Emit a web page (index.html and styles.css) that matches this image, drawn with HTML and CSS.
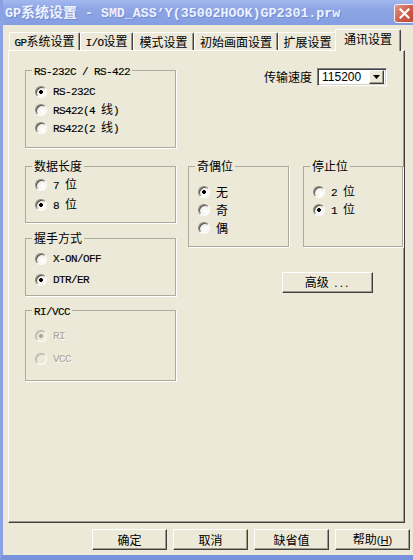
FILE: index.html
```html
<!DOCTYPE html>
<html lang="zh">
<head>
<meta charset="utf-8">
<title>GP系统设置</title>
<link rel="stylesheet" href="styles.css">
</head>
<body>
<div class="window">
  <div class="titlebar">
    <span class="title"><span class="tm">GP</span><span class="tc">系统设置</span><span class="tm"> - SMD_ASS’Y(35002HOOK)GP2301.prw</span></span>
    <span class="close"><svg width="11" height="11" viewBox="0 0 11 11"><path d="M1.5 1.5 L9.5 9.5 M9.5 1.5 L1.5 9.5" stroke="#fff" stroke-width="2.2" stroke-linecap="square"/></svg></span>
  </div>
  <div class="client">
    <div class="tabs">
      <div class="tab t1"><span class="lbl"><span class="m">GP</span>系统设置</span></div>
      <div class="tab t2"><span class="lbl"><span class="m">I/O</span>设置</span></div>
      <div class="tab t3">模式设置</div>
      <div class="tab t4">初始画面设置</div>
      <div class="tab t5">扩展设置</div>
      <div class="tab sel">通讯设置</div>
    </div>
    <div class="panel">
      <div class="leftcol">
        <fieldset class="grp g1">
          <legend><span class="m">RS-232C / RS-422</span></legend>
          <div class="opts">
            <div class="opt"><span class="radio on"></span><span class="lbl m">RS-232C</span></div>
            <div class="opt"><span class="radio"></span><span class="lbl"><span class="m">RS422(4 </span>线<span class="m">)</span></span></div>
            <div class="opt"><span class="radio"></span><span class="lbl"><span class="m">RS422(2 </span>线<span class="m">)</span></span></div>
          </div>
        </fieldset>
        <fieldset class="grp g2">
          <legend>数据长度</legend>
          <div class="opts">
            <div class="opt"><span class="radio"></span><span class="lbl"><span class="m">7 </span>位</span></div>
            <div class="opt"><span class="radio on"></span><span class="lbl"><span class="m">8 </span>位</span></div>
          </div>
        </fieldset>
        <fieldset class="grp g3">
          <legend>握手方式</legend>
          <div class="opts">
            <div class="opt"><span class="radio"></span><span class="lbl m">X-ON/OFF</span></div>
            <div class="opt"><span class="radio on"></span><span class="lbl m">DTR/ER</span></div>
          </div>
        </fieldset>
        <fieldset class="grp g4">
          <legend><span class="m">RI/VCC</span></legend>
          <div class="opts">
            <div class="opt dis"><span class="radio on"></span><span class="lbl m">RI</span></div>
            <div class="opt dis"><span class="radio"></span><span class="lbl m">VCC</span></div>
          </div>
        </fieldset>
      </div>
      <div class="rightcol">
        <div class="speed">
          <span class="speed-label">传输速度</span>
          <div class="combo">
            <span class="combo-value">115200</span>
            <span class="combo-btn"><svg width="7" height="4" viewBox="0 0 7 4"><path d="M0 0 H7 L3.5 4 Z" fill="#000"/></svg></span>
          </div>
        </div>
        <div class="pair">
          <fieldset class="grp g5">
            <legend>奇偶位</legend>
            <div class="opts">
              <div class="opt"><span class="radio on"></span><span class="lbl">无</span></div>
              <div class="opt"><span class="radio"></span><span class="lbl">奇</span></div>
              <div class="opt"><span class="radio"></span><span class="lbl">偶</span></div>
            </div>
          </fieldset>
          <fieldset class="grp g6">
            <legend>停止位</legend>
            <div class="opts">
              <div class="opt"><span class="radio"></span><span class="lbl"><span class="m">2 </span>位</span></div>
              <div class="opt"><span class="radio on"></span><span class="lbl"><span class="m">1 </span>位</span></div>
            </div>
          </fieldset>
        </div>
        <div class="btn adv"><span class="lbl">高级 <span class="dots">...</span></span></div>
      </div>
    </div>
    <div class="buttons">
      <div class="btn">确定</div>
      <div class="btn">取消</div>
      <div class="btn">缺省值</div>
      <div class="btn"><span class="lbl">帮助<span class="hk">(<u>H</u>)</span></span></div>
    </div>
  </div>
</div>
</body>
</html>
```
FILE: styles.css
```css
* { box-sizing: border-box; }
html, body { margin: 0; padding: 0; }
body {
  font-family: "Noto Sans CJK SC", "Liberation Sans", sans-serif;
  font-size: 12px;
  color: #000;
  background: #ECE9D8;
}
.m {
  font-family: "Liberation Mono", "Noto Sans CJK SC", monospace;
  font-size: 11px;
  letter-spacing: -0.6px;
  -webkit-text-stroke: 0.15px #000;
}
.lbl { white-space: nowrap; }

.window {
  width: 413px;
  height: 560px;
  background: #ECE9D8;
  border-left: 3px solid #8aa2e4;
  border-bottom: 5px solid #7892dd;
  display: flex;
  flex-direction: column;
  overflow: hidden;
}

.titlebar {
  height: 25px;
  margin-left: -3px;
  padding-left: 5px;
  background: linear-gradient(#a4b8ee, #8ea6e5 35%, #859ee2);
  display: flex;
  align-items: center;
  justify-content: space-between;
  flex: none;
}
.title { color: #eef2fd; font-weight: bold; white-space: nowrap; line-height: 16px; text-shadow: 1px 1px 0 #7189d4; }
.title .tm { font-family: "Liberation Mono", monospace; font-size: 13.3px; }
.title .tc { font-family: "Noto Sans CJK SC", sans-serif; font-size: 14px; }
.close {
  align-self: flex-start;
  margin-top: 4px;
  margin-right: -2px;
  width: 21px;
  height: 19px;
  border: 1px solid #f3f0f0;
  border-radius: 3px;
  background: linear-gradient(135deg, #e3988b, #cc5b4b 55%, #bb4a3c);
  display: flex;
  align-items: center;
  justify-content: center;
}

.client { flex: 1; padding: 4px 3px 0 5px; display: flex; flex-direction: column; }

.tabs {
  display: flex;
  align-items: flex-end;
  height: 22px;
  padding-left: 1px;
  margin-bottom: -1px;
  position: relative;
  z-index: 1;
}
.tab {
  height: 18px;
  margin-bottom: 1px;
  border-top: 1px solid #fff;
  border-left: 1px solid #fff;
  border-right: 1px solid #404040;
  box-shadow: inset -1px 0 0 #9d9a8c;
  border-radius: 2px 2px 0 0;
  display: flex;
  align-items: center;
  justify-content: center;
  line-height: 14px;
  white-space: nowrap;
  background: #ECE9D8;
}
.t1 { width: 71px; }
.t2 { width: 53px; }
.t3 { width: 61px; }
.t4 { width: 84px; }
.t5 { width: 59px; }
.tab.sel {
  width: 66px;
  height: 22px;
  margin: 0 0 0 -2px;
  padding-bottom: 3px;
  position: relative;
  z-index: 2;
}

.panel {
  width: 397px;
  height: 473px;
  border-top: 1px solid #fff;
  border-left: 1px solid #fff;
  border-right: 1px solid #404040;
  border-bottom: 1px solid #404040;
  box-shadow: inset -1px -1px 0 #9d9a8c;
  padding-left: 16px;
  display: flex;
  flex: none;
}

.leftcol { width: 151px; display: flex; flex-direction: column; }
.rightcol { flex: 1; display: flex; flex-direction: column; }

.grp {
  margin: 0;
  padding: 0;
  min-width: 0;
  border: 1px solid #aeab9c;
  box-shadow: 1px 1px 0 #fff;
}
.grp legend {
  margin-left: 6px;
  padding: 0 2px;
  height: 12px;
  line-height: 12px;
  white-space: nowrap;
}
.opts { display: flex; flex-direction: column; padding-left: 9px; }
.opt { height: 16px; display: flex; align-items: center; gap: 6px; white-space: nowrap; line-height: 14px; }
.opt.dis { color: #aca899; text-shadow: 1px 1px 0 #fff; }
.opt.dis .m { -webkit-text-stroke: 0.15px #aca899; }

.radio {
  width: 12px;
  height: 12px;
  flex: none;
  border-radius: 50%;
  border: 1px solid;
  border-color: #8a887e #fff #fff #8a887e;
  box-shadow: inset 1px 1px 0 #55544e;
  background: radial-gradient(circle at 65% 65%, #ffffff 0, #f4f3ee 45%, #d9d7cc 100%);
}
.radio.on { background: radial-gradient(circle at 50% 50%, #000 0, #000 1.6px, transparent 2.2px), radial-gradient(circle at 65% 65%, #ffffff 0, #f4f3ee 45%, #d9d7cc 100%); }
.dis .radio { background: #ECE9D8; border-color: #b8b5a8 #fff #fff #b8b5a8; box-shadow: inset 1px 1px 0 #c9c6b9; }
.dis .radio.on { background: radial-gradient(circle at 50% 50%, #aca899 0, #aca899 1.6px, transparent 2.2px), #ECE9D8; }

.g1 { margin-top: 13px; }
.g1 .opts { padding-top: 8px; padding-bottom: 11px; gap: 2px; }
.g2 { margin-top: 12px; }
.g2 .opts { padding-top: 5px; padding-bottom: 9px; gap: 4px; }
.g3 { margin-top: 9px; }
.g3 .opts { padding-top: 7px; padding-bottom: 7px; gap: 5px; }
.g4 { margin-top: 8px; }
.g4 .opts { padding-top: 12px; padding-bottom: 13px; gap: 7px; }

.speed {
  margin-top: 17px;
  height: 18px;
  display: flex;
  align-items: center;
  justify-content: flex-end;
  gap: 5px;
  padding-right: 17px;
}
.speed-label { line-height: 14px; }
.combo {
  width: 70px;
  height: 18px;
  background: #fff;
  border: 1px solid;
  border-color: #808080 #fff #fff #808080;
  box-shadow: inset 1px 1px 0 #404040, inset -1px -1px 0 #d4d0c8;
  display: flex;
  align-items: center;
  padding: 2px;
}
.combo-value { flex: 1; padding-left: 2px; font-family: "Liberation Sans", sans-serif; font-size: 12px; line-height: 14px; }
.combo-btn {
  width: 15px;
  height: 14px;
  background: #ECE9D8;
  border: 1px solid;
  border-color: #fff #404040 #404040 #fff;
  box-shadow: inset -1px -1px 0 #9d9a8c;
  display: flex;
  align-items: center;
  justify-content: center;
}

.pair { display: flex; margin-top: 74px; }
.g5 { width: 101px; margin-left: 12px; }
.g6 { width: 100px; margin-left: 14px; }
.g5 .opts, .g6 .opts { padding-top: 12px; padding-bottom: 10px; gap: 2px; }

.btn {
  height: 21px;
  width: 75px;
  border: 1px solid;
  border-color: #fff #404040 #404040 #fff;
  box-shadow: inset -1px -1px 0 #9d9a8c;
  background: #ECE9D8;
  display: flex;
  align-items: center;
  justify-content: center;
  line-height: 14px;
  white-space: nowrap;
}
.adv { width: 91px; margin-top: 25px; margin-left: 106px; }
.dots { font-family: "Liberation Sans", sans-serif; letter-spacing: 2px; margin-left: 3px; }
.hk { font-family: "Liberation Sans", sans-serif; font-size: 11px; }

.buttons {
  margin-top: 6px;
  display: flex;
  justify-content: flex-end;
  gap: 6px;
}
```
